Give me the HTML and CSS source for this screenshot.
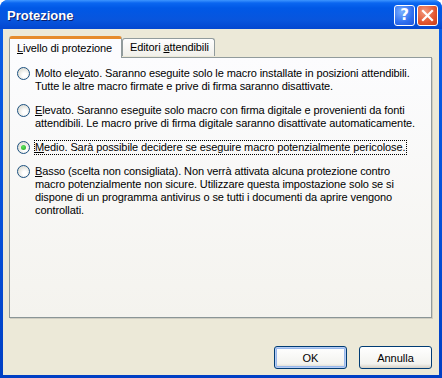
FILE: index.html
```html
<!DOCTYPE html>
<html lang="it">

<head>
  <meta charset="UTF-8" />
  <title>Protezione</title>
  <link rel="stylesheet" href="styles.css">
</head>

<body>
  <div class="window">
    <div class="titlebar">
      <span class="title">Protezione</span>
      <div class="caption-buttons">
        <span class="cap-btn help">?</span>
        <span class="cap-btn close">
          <svg width="13" height="13" viewBox="0 0 13 13">
            <path d="M2 2 L11 11 M11 2 L2 11" stroke="#fff" stroke-width="2.2" stroke-linecap="square" />
          </svg>
        </span>
      </div>
    </div>

    <div class="client">
      <div class="tabs">
        <div class="tab selected"><u>L</u>ivello di protezione</div>
        <div class="tab">Editori <u>a</u>ttendibili</div>
      </div>

      <div class="panel">
        <div class="option">
          <span class="radio"></span>
          <div class="label">Molto ele<u>v</u>ato. Saranno eseguite solo le macro installate in posizioni attendibili.<br>Tutte le altre macro firmate e prive di firma saranno disattivate.</div>
        </div>
        <div class="option">
          <span class="radio"></span>
          <div class="label"><u>E</u>levato. Saranno eseguite solo macro con firma digitale e provenienti da fonti<br>attendibili. Le macro prive di firma digitale saranno disattivate automaticamente.</div>
        </div>
        <div class="option">
          <span class="radio checked"></span>
          <div class="label focus"><u>M</u>edio. Sarà possibile decidere se eseguire macro potenzialmente pericolose.</div>
        </div>
        <div class="option">
          <span class="radio"></span>
          <div class="label"><u>B</u>asso (scelta non consigliata). Non verrà attivata alcuna protezione contro<br>macro potenzialmente non sicure. Utilizzare questa impostazione solo se si<br>dispone di un programma antivirus o se tutti i documenti da aprire vengono<br>controllati.</div>
        </div>
      </div>

      <div class="buttons">
        <button class="btn default">OK</button>
        <button class="btn">Annulla</button>
      </div>
    </div>
  </div>
</body>

</html>
```

FILE: styles.css
```css
body {
  margin: 0;
  font-family: "Liberation Sans", Arial, sans-serif;
  font-size: 11px;
  letter-spacing: -0.1px;
  color: #000;
  background: #fff;
}

.window {
  width: 442px;
  height: 378px;
  box-sizing: border-box;
  background: linear-gradient(to bottom, #0a5fe8, #0550d8 60%, #003fc4);
  border-radius: 8px 8px 0 0;
  display: flex;
  flex-direction: column;
}

.titlebar {
  height: 29px;
  display: flex;
  align-items: center;
  justify-content: space-between;
  padding: 0 7px 0 7px;
  border-radius: 8px 8px 0 0;
  background: linear-gradient(to bottom, #3d95ff 0px, #0a66f0 3px, #0058e6 8px, #0855dd 20px, #0347d0 29px);
}

.title {
  color: #fff;
  font-family: "Liberation Sans", Arial, sans-serif;
  font-weight: bold;
  font-size: 13px;
  letter-spacing: 0;
  text-shadow: 1px 1px 0 #0a1e6b;
  margin-top: 1px;
}

.caption-buttons {
  display: flex;
  gap: 2px;
  margin-right: -3px;
  margin-top: 1px;
}

.cap-btn {
  width: 19px;
  height: 19px;
  border: 1px solid #fff;
  border-radius: 3px;
  display: flex;
  align-items: center;
  justify-content: center;
  color: #fff;
  font-family: "DejaVu Sans", sans-serif;
  font-weight: bold;
  font-size: 15px;
}

.help {
  background: radial-gradient(circle at 35% 30%, #7ab0ff, #2f6ff0 60%, #1f55d8);
}

.close {
  background: radial-gradient(circle at 35% 30%, #f39a80, #e2552e 60%, #c83d18);
}

.client {
  flex: 1;
  margin: 0 3px 3px 3px;
  background: #ece9d8;
  padding: 7px 7px 0 6px;
  display: flex;
  flex-direction: column;
}

.tabs {
  display: flex;
  align-items: flex-end;
  height: 21px;
  position: relative;
  z-index: 1;
}

.tab {
  box-sizing: border-box;
  height: 18px;
  padding: 0 5px 0 7px;
  border: 1px solid #919b9c;
  border-bottom: none;
  border-radius: 3px 3px 0 0;
  background: linear-gradient(to bottom, #fefefe, #f1f0ea);
  line-height: 17px;
  margin-bottom: 1px;
  white-space: nowrap;
}

.tab.selected {
  height: 22px;
  margin-bottom: -1px;
  padding: 0 8px 0 7px;
  width: 113px;
  border-top: 3px solid #ffc83c;
  border-color: #e68b2c #919b9c #919b9c #919b9c;
  background: #fcfcfe;
  line-height: 18px;
}

.panel {
  box-sizing: border-box;
  width: 423px;
  height: 261px;
  border: 1px solid #919b9c;
  border-bottom-color: #8a9596;
  background: linear-gradient(to bottom, #fcfcfe, #f4f3ee);
  box-shadow: 1px 1px 0 #d0cec2;
  padding: 9px 6px 0 7px;
}

.option {
  display: flex;
  align-items: flex-start;
  margin-bottom: 11px;
}

.radio {
  box-sizing: border-box;
  width: 13px;
  height: 13px;
  flex: none;
  border: 1px solid #1c5180;
  border-radius: 50%;
  background: radial-gradient(circle at 60% 65%, #ffffff 20%, #e6e6e0 60%, #d6d3c8);
  margin-right: 5px;
  display: flex;
  align-items: center;
  justify-content: center;
}

.radio.checked::after {
  content: "";
  width: 5px;
  height: 5px;
  border-radius: 50%;
  background: radial-gradient(circle at 40% 35%, #5ee65e, #21a121);
}

.label {
  line-height: 13px;
  white-space: nowrap;
}

.label.focus {
  outline: 1px dotted #000;
  outline-offset: 0;
  padding-right: 1px;
}

.buttons {
  display: flex;
  justify-content: flex-end;
  gap: 12px;
  margin-top: 28px;
}

.btn {
  width: 73px;
  height: 23px;
  border: 1px solid #003c74;
  border-radius: 3px;
  background: linear-gradient(to bottom, #ffffff, #f3f3ef 80%, #d6d0c5);
  font-family: "Liberation Sans", Arial, sans-serif;
  font-size: 11px;
  color: #000;
  padding: 0;
}

.btn.default {
  box-shadow: inset 0 0 0 1px #b7cdf5, inset 0 0 0 2px #98b8ea;
}
```
